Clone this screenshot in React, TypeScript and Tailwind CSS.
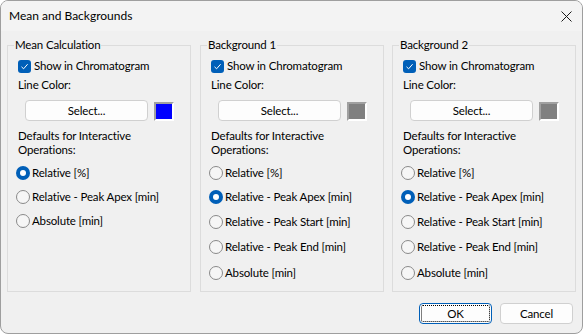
import React from 'react';

const font = { fontFamily: 'Lato, "Liberation Sans", sans-serif' };

function Checkbox({ label }: { label: string }) {
  return (
    <div className="flex items-center h-[16px] ml-[10px]">
      <span className="w-[13px] h-[13px] rounded-[3px] bg-[#005fb8] flex items-center justify-center">
        <svg width="9" height="9" viewBox="0 0 9 9">
          <path d="M1.5 4.8 L3.6 6.8 L7.6 2.2" fill="none" stroke="white" strokeWidth="1" />
        </svg>
      </span>
      <span className="ml-[3px]">{label}</span>
    </div>
  );
}

function Radio({ label, checked, mt }: { label: string; checked?: boolean; mt: string }) {
  return (
    <div className={`flex items-center h-[16px] ml-[8px] ${mt}`}>
      {checked ? (
        <span className="w-[14px] h-[14px] rounded-full bg-[#005fb8] flex items-center justify-center">
          <span className="w-[6px] h-[6px] rounded-full bg-white" />
        </span>
      ) : (
        <span className="w-[14px] h-[14px] rounded-full border border-[#8a8a8a] bg-[#f6f6f6]" />
      )}
      <span className="ml-[2px]">{label}</span>
    </div>
  );
}

function Group({ title, swatch, options, checkedIndex, margins }: {
  title: string; swatch: string; options: string[]; checkedIndex: number; margins: string[];
}) {
  return (
    <fieldset className="w-[184px] h-[255px] border border-[#dcdcdc] px-0 pt-0 pb-0">
      <legend className="ml-[6px] px-[1px] leading-[16px]">{title}</legend>
      <div className="mt-[5px]">
        <Checkbox label="Show in Chromatogram" />
      </div>
      <div className="mt-[3px] ml-[10px] h-[16px] leading-[16px]">Line Color:</div>
      <div className="mt-[7px] flex items-start">
        <button className="ml-[17px] w-[123px] h-[21px] rounded-[4px] border border-[#d0d0d0] bg-[#fdfdfd] text-center leading-[18px]">
          Select...
        </button>
        <span className="ml-[6px] mt-[2px] w-[20px] h-[19px] border-2 border-t-[#a0a0a0] border-l-[#a0a0a0] border-b-white border-r-white">
          <span className={`block w-full h-full ${swatch}`} />
        </span>
      </div>
      <div className="mt-[8px] ml-[10px] leading-[14px]">
        Defaults for Interactive<br />Operations:
      </div>
      {options.map((o, i) => (
        <Radio key={o} label={o} checked={i === checkedIndex} mt={margins[i]} />
      ))}
    </fieldset>
  );
}

export default function App() {
  const opts = ['Relative [%]', 'Relative - Peak Apex [min]', 'Relative - Peak Start [min]', 'Relative - Peak End [min]', 'Absolute [min]'];
  const bgMargins = ['mt-[8px]', 'mt-[8px]', 'mt-[9px]', 'mt-[9px]', 'mt-[10px]'];
  return (
    <div className="w-[583px] h-[334px] bg-white text-[11.5px] tracking-[-0.15px] text-black" style={font}>
      <div className="w-full h-full rounded-[8px] border border-[#9e9e9e] overflow-hidden bg-[#f0f0f0] flex flex-col">
        <div className="h-[30px] bg-[#f3f3f3] flex items-center justify-between pl-[8px] pr-[10px]">
          <span className="leading-[16px] text-[12px] tracking-normal">Mean and Backgrounds</span>
          <svg width="11" height="11" viewBox="0 0 11 11">
            <path d="M0.5 0.5 L10.5 10.5 M10.5 0.5 L0.5 10.5" stroke="#1a1a1a" strokeWidth="1" />
          </svg>
        </div>
        <div className="flex mt-[6px] ml-[6px]">
          <Group title="Mean Calculation" swatch="bg-[#0000ff]" options={[opts[0], opts[1], opts[4]]} checkedIndex={0} margins={['mt-[8px]', 'mt-[8px]', 'mt-[8px]']} />
          <div className="ml-[9px]">
            <Group title="Background 1" swatch="bg-[#808080]" options={opts} checkedIndex={1} margins={bgMargins} />
          </div>
          <div className="ml-[8px]">
            <Group title="Background 2" swatch="bg-[#808080]" options={opts} checkedIndex={1} margins={bgMargins} />
          </div>
        </div>
        <div className="flex justify-end gap-[8px] mt-[11px] pr-[9px]">
          <button className="relative w-[73px] h-[21px] rounded-[4px] border border-[#005fb8] bg-[#fdfdfd] leading-[18px]">
            <span className="absolute inset-[1px] border border-dotted border-black rounded-[2px]" />
            OK
          </button>
          <button className="w-[73px] h-[21px] rounded-[4px] border border-[#d0d0d0] bg-[#fdfdfd] leading-[18px]">
            Cancel
          </button>
        </div>
      </div>
    </div>
  );
}
